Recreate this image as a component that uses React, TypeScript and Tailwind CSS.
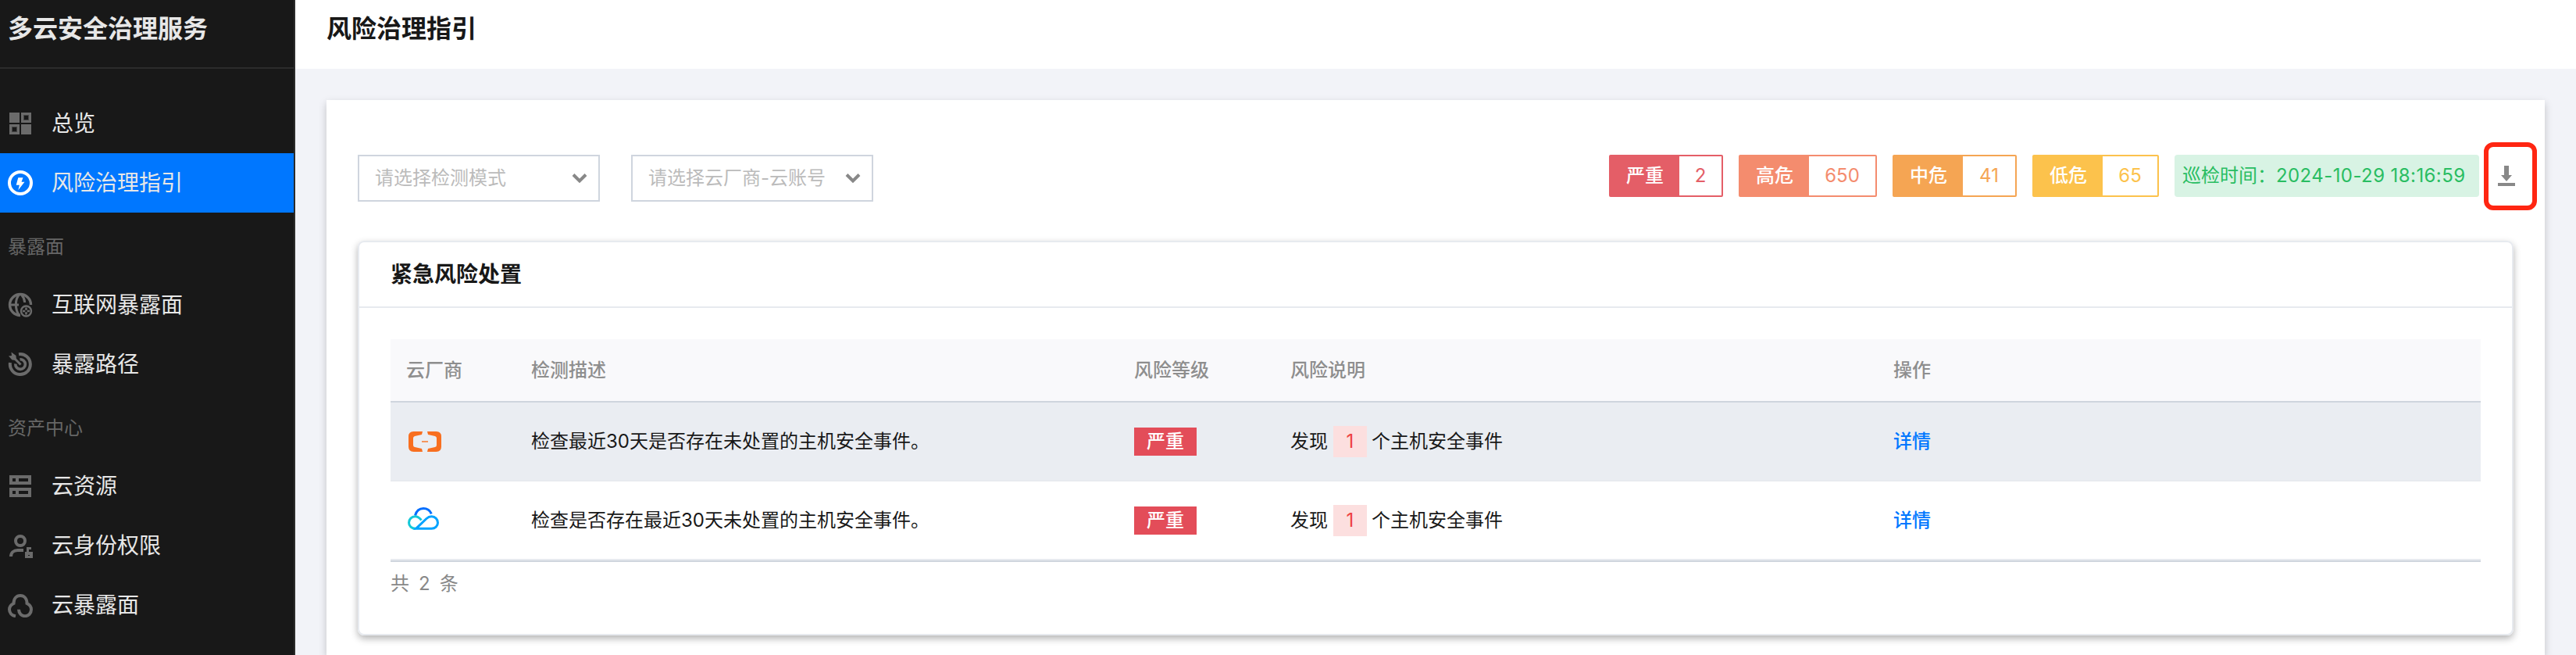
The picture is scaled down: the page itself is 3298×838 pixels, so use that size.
import React from 'react'
import clsx from 'clsx'


type NavItem = {
  label: string
  icon: React.ReactNode
  active?: boolean
}


type NavGroup = {
  title?: string
  items: NavItem[]
}


type Risk = {
  vendor: React.ReactNode
  description: string
  level: string
  count: number
  subject: string
}


const Icon = ({ children }: { children: React.ReactNode }) => (
  <svg viewBox="0 0 32 32" className="w-8 h-8 shrink-0" fill="none" stroke="currentColor" strokeWidth={4}>
    {children}
  </svg>
)


const OverviewIcon = () => (
  <Icon>
    <g fill="currentColor" stroke="none">
      <path d="M2 2h13v13H2zM17 2h13v13H17zM2 17h13v13H2zM17 17h13v13H17z" />
      <path d="M20 5h7v7h-7zM5 20h7v7H5z" fill="#444444" />
      <path d="M21 6h5v5h-5zM6 21h5v5H6z" fill="#181818" />
    </g>
  </Icon>
)


const BoltIcon = () => (
  <Icon>
    <circle cx="16" cy="16" r="14" />
    <path d="M13.3 9.3h6.2l-2 5.4h4L13.3 25.2l1.6-6.5h-4.2z" fill="currentColor" stroke="none" />
  </Icon>
)


const GlobeIcon = () => (
  <Icon>
    <g strokeWidth={3.4}>
      <path d="M29.5 16A13.5 13.5 0 1 0 16 29.5" />
      <path d="M14.5 3C9 9 9 22 14.5 29M17.5 3c3 3.5 4 6.5 4.2 10M3 16h11" strokeWidth={3} />
      <circle cx="23.5" cy="24" r="6.5" strokeWidth={2.4} />
      <path d="M23.5 19.5v3.2M23.5 25.3v3.2M19 24h3.2M24.8 24H28" strokeWidth={2.6} />
    </g>
  </Icon>
)


const TargetIcon = () => (
  <Icon>
    <path d="M14 3.2A13 13 0 1 1 3 14" />
    <path d="M15.5 9.8A6.3 6.3 0 1 1 9.8 15.5" strokeWidth={3.6} />
    <path d="M7 7l9.5 9.5" strokeWidth={3} />
    <path d="M4.5 0.5l.5 4.5-4 .5 4.5 5 5.5.5-.5-6z" fill="currentColor" stroke="none" />
  </Icon>
)


const ServerIcon = () => (
  <Icon>
    <path d="M4 4h24v8H4zM4 20h24v8H4zM12 4v8M12 20v8" />
  </Icon>
)


const UserLockIcon = () => (
  <Icon>
    <circle cx="16" cy="10" r="6" />
    <path d="M4 30c0-5 3.5-8 8.500-8H20" />
    <path d="M25.5 25v-5.500H30" strokeWidth={3} />
    <path d="M24 26h6v5h-6z" />
  </Icon>
)


const CloudIcon = () => (
  <Icon>
    <path d="M10 30.300C5 29.5 2 26 2 21.800c0-3.700 2.300-6.300 5.500-7.800C7.5 8 11 4 16 4s8.500 4 8.500 10c3.200 1.500 5.500 4.100 5.500 7.800 0 4.700-3.500 8.400-8 8.400s-8-3.700-8-8.400" />
  </Icon>
)


const AliyunLogo = () => (
  <svg viewBox="0 0 42 26" className="ml-[3px] w-[42px] h-[26px]" fill="#f86f20">
    <path d="M18 0H6.500Q0 0 0 6.500v13Q0 26 6.500 26H18l-1-4-9-2q-2-.5-2-2.500V8.500Q6 6.500 8 6l9-2z" />
    <path d="M24 0h11.500Q42 0 42 6.500v13Q42 26 35.500 26H24l1-4 9-2q2-.5 2-2.500v-9Q36 6.500 34 6l-9-2z" />
    <path d="M17 12h8v2h-8z" opacity=".7" />
  </svg>
)


const TencentCloudLogo = () => (
  <svg viewBox="0 0 40 29" className="relative -top-0.5 ml-0.5 w-10 h-[29px]" fill="none" strokeWidth={3}>
    <path d="M9.500 10.500C11 5 15 1.500 20 1.500c4.500 0 8.500 2.500 10.300 6.800" stroke="#006eff" />
    <path d="M17.500 16.500c-2.500-3-5-4.700-8-4.700-4.500 0-8 3.500-8 7.900s3.500 7.600 8.500 7.600" stroke="#13c8d8" />
    <path d="M10.500 27.300L24 14.500c2-1.800 4-2.700 6.500-2.700 4.500 0 8 3.500 8 7.900s-3.500 7.600-8 7.600z" stroke="#00a3ff" />
  </svg>
)


const navGroups: NavGroup[] = [
  {
    items: [
      { label: '总览', icon: <OverviewIcon /> },
      { label: '风险治理指引', icon: <BoltIcon />, active: true },
    ],
  },
  {
    title: '暴露面',
    items: [
      { label: '互联网暴露面', icon: <GlobeIcon /> },
      { label: '暴露路径', icon: <TargetIcon /> },
    ],
  },
  {
    title: '资产中心',
    items: [
      { label: '云资源', icon: <ServerIcon /> },
      { label: '云身份权限', icon: <UserLockIcon /> },
      { label: '云暴露面', icon: <CloudIcon /> },
    ],
  },
]


const levels = [
  { label: '严重', count: 2, width: 'w-[146px]', frame: 'border-[#e45e67] text-[#e45e67]', fill: 'bg-[#e45e67]' },
  { label: '高危', count: 650, width: 'w-[177px]', frame: 'border-[#f48c6e] text-[#f48c6e]', fill: 'bg-[#f48c6e]' },
  { label: '中危', count: 41, width: 'w-[159px]', frame: 'border-[#f5a553] text-[#f5a553]', fill: 'bg-[#f5a553]' },
  { label: '低危', count: 65, width: 'w-[162px]', frame: 'border-[#fcc24c] text-[#fcc24c]', fill: 'bg-[#fcc24c]' },
]


const risks: Risk[] = [
  { vendor: <AliyunLogo />, description: '检查最近30天是否存在未处置的主机安全事件。', level: '严重', count: 1, subject: '个主机安全事件' },
  { vendor: <TencentCloudLogo />, description: '检查是否存在最近30天未处置的主机安全事件。', level: '严重', count: 1, subject: '个主机安全事件' },
]


const columns = ['云厂商', '检测描述', '风险等级', '风险说明', '操作']
const grid = 'grid grid-cols-[160px_772px_200px_772px_772px] items-center'


const Sidebar = () => (
  <aside className="w-[378px] shrink-0 bg-[#181818] border-r-2 border-[#2b2b2b] text-[#e7e7e7]">
    <div className="h-[88px] border-b-2 border-[#2b2b2b] pl-2.5 pt-[15px]">
      <h1 className="text-[32px] leading-[44px] font-bold">多云安全治理服务</h1>
    </div>
    <nav className="pt-8">
      {navGroups.map((group, i) => (
        <div key={i}>
          {group.title && <div className="h-20 pl-2.5 pt-[27px] text-2xl leading-[34px] text-[#666666]">{group.title}</div>}
          {group.items.map((item) => (
            <a key={item.label} className={clsx('h-[76px] flex items-center gap-6 pl-2.5', item.active && 'bg-[#0077ff]')}>
              <span className={clsx(item.active ? 'text-white' : 'text-[#6b6b6b]')}>{item.icon}</span>
              <span className="text-[28px] leading-10">{item.label}</span>
            </a>
          ))}
        </div>
      ))}
    </nav>
  </aside>
)


const Select = ({ placeholder }: { placeholder: string }) => (
  <div className="w-[310px] h-[60px] border-2 border-[#cfd5de] flex items-center justify-between pl-5 pr-3.5 text-2xl text-[#bbbbbb]">
    <span>{placeholder}</span>
    <svg viewBox="0 0 20 14" className="w-5 h-3.5" fill="none" stroke="#888888" strokeWidth={4}>
      <path d="M2 2.500l8 8 8-8" />
    </svg>
  </div>
)


const Toolbar = () => (
  <div className="flex justify-between items-start">
    <div className="flex gap-10">
      <Select placeholder="请选择检测模式" />
      <Select placeholder="请选择云厂商-云账号" />
    </div>
    <div className="flex gap-5 text-2xl">
      {levels.map((level) => (
        <div key={level.label} className={clsx('h-[54px] flex border-2 rounded-xs', level.width, level.frame)}>
          <span className={clsx('w-[88px] flex items-center justify-center text-white font-medium', level.fill)}>{level.label}</span>
          <span className="flex-1 flex items-center justify-center">{level.count}</span>
        </div>
      ))}
      <div className="w-[390px] h-[54px] rounded-sm bg-[#d8f3e4] text-[#29bd62] flex items-center pl-2.5 whitespace-nowrap">
        <span>巡检时间：</span>
        <span className="tracking-[0.42px]">2024-10-29 18:16:59</span>
      </div>
      <button className="relative w-6 h-[54px] flex items-center pl-1" aria-label="下载">
        <svg viewBox="0 0 22 26" className="w-[22px] h-[26px] shrink-0" fill="#888888">
          <path d="M8 0h6v12h4l-7 8-7-8h4zM0 22h22v4H0z" />
        </svg>
        <span className="absolute -left-3.5 -top-4 w-[68px] h-[87px] border-[6px] border-[#ff2612] rounded-xl" />
      </button>
    </div>
  </div>
)


const RiskTable = () => (
  <div className="text-2xl leading-[34px]">
    <div className={clsx(grid, 'h-[81px] bg-[#f9f9fb] border-b-2 border-[#cfd5de] text-[#8e8e8e] font-medium')}>
      {columns.map((column) => (
        <div key={column} className="pl-5">{column}</div>
      ))}
    </div>
    <div className="border-b-2 border-[#cfd5de]">
      {risks.map((risk, i) => (
        <div key={i} className={clsx(grid, 'h-[101px] border-b-2 border-[#e7eaef] text-[#181818]', i === 0 && 'bg-[#eaedf2]')}>
          <div className="pl-5">{risk.vendor}</div>
          <div className="pl-5">{risk.description}</div>
          <div className="pl-5">
            <span className="w-20 h-9 flex items-center justify-center bg-[#e34d59] text-white font-medium">{risk.level}</span>
          </div>
          <div className="pl-5 flex items-center">
            <span>发现</span>
            <span className="w-[43px] h-10 ml-[7px] mr-1.5 flex items-center justify-center bg-[#fcdfdf] text-[#ee4242]">{risk.count}</span>
            <span>{risk.subject}</span>
          </div>
          <div className="pl-5">
            <a className="text-[#0077ff] font-medium">详情</a>
          </div>
        </div>
      ))}
    </div>
    <div className="flex gap-3 pt-[11px] text-[#888888]">
      <span>共</span>
      <span>{risks.length}</span>
      <span>条</span>
    </div>
  </div>
)


export default function App() {
  return (
    <div className="w-[3298px] h-[838px] flex overflow-hidden bg-[#f2f3f8] font-['Inter','Noto_Sans_CJK_SC',sans-serif]">
      <Sidebar />
      <main className="flex-1 flex flex-col">
        <header className="h-[88px] shrink-0 bg-white pl-10 pt-[15px]">
          <h2 className="text-[32px] leading-[44px] font-bold text-[#181818]">风险治理指引</h2>
        </header>
        <div className="flex-1 px-10 pt-10">
          <div className="h-full bg-white px-10 pt-[70px] shadow-[0_4px_10px_rgba(0,0,0,0.2)]">
            <Toolbar />
            <section className="mt-[50px] h-[505px] border-2 border-[#e7eaef] rounded-lg shadow-[0_4px_10px_rgba(0,0,0,0.3)]">
              <h3 className="h-[84px] border-b-2 border-[#e7eaef] pl-10 flex items-center text-[28px] font-bold text-[#181818]">紧急风险处置</h3>
              <div className="px-10 pt-10">
                <RiskTable />
              </div>
            </section>
          </div>
        </div>
      </main>
    </div>
  )
}
